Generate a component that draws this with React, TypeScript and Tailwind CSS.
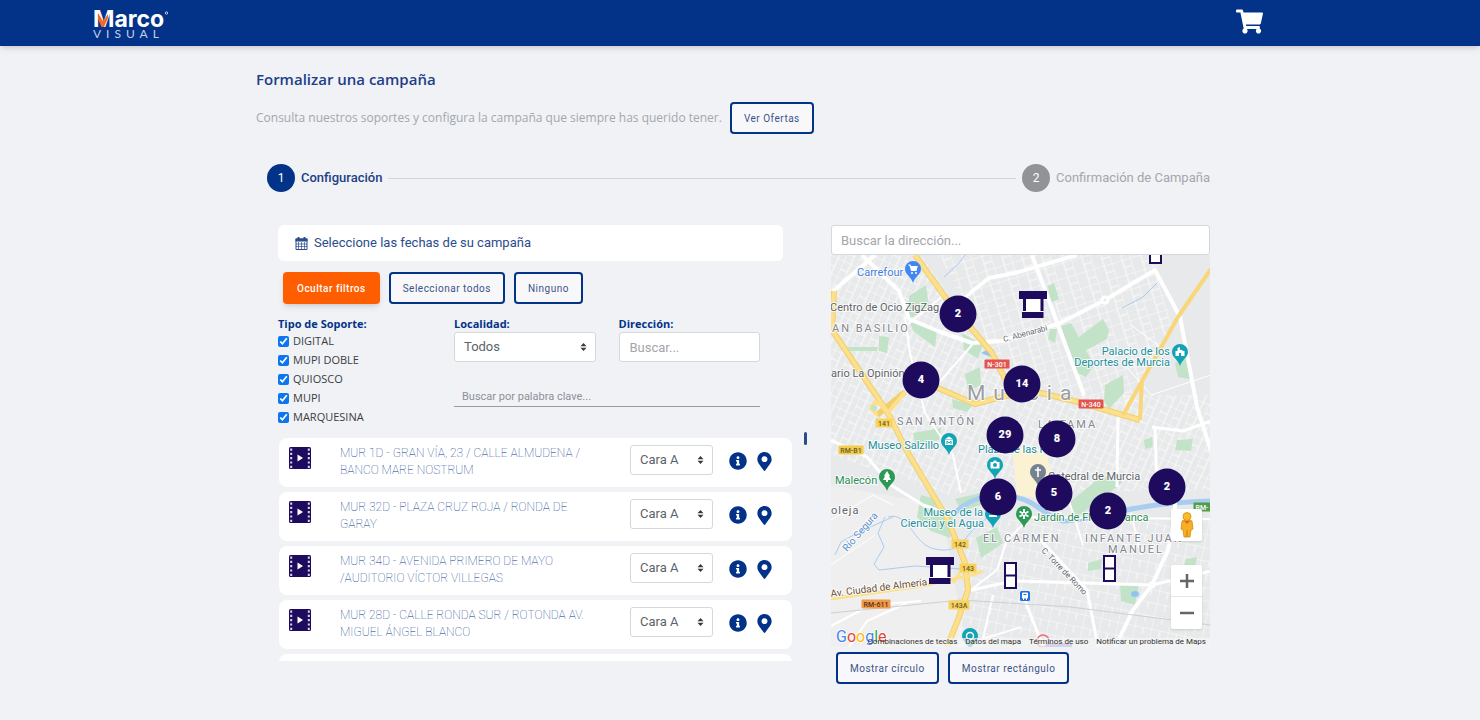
import React from 'react';
import { FaInfoCircle, FaMapMarkerAlt, FaShoppingCart } from 'react-icons/fa';

interface Support {
  id: string;
  name: string;
}

const supports: Support[] = [
  { id: 'mur-1d', name: 'MUR 1D - GRAN VÍA, 23 / CALLE ALMUDENA / BANCO MARE NOSTRUM' },
  { id: 'mur-32d', name: 'MUR 32D - PLAZA CRUZ ROJA / RONDA DE GARAY' },
  { id: 'mur-34d', name: 'MUR 34D - AVENIDA PRIMERO DE MAYO /AUDITORIO VÍCTOR VILLEGAS' },
  { id: 'mur-28d', name: 'MUR 28D - CALLE RONDA SUR / ROTONDA AV. MIGUEL ÁNGEL BLANCO' },
];

const supportTypes = ['DIGITAL', 'MUPI DOBLE', 'QUIOSCO', 'MUPI', 'MARQUESINA'];

const MAP_WIDTH = 379;
const MAP_HEIGHT = 392;

const clusters = [
  { x: 127, y: 59, count: 2 },
  { x: 90, y: 125, count: 4 },
  { x: 191, y: 129, count: 14 },
  { x: 174, y: 180, count: 29 },
  { x: 226, y: 184, count: 8 },
  { x: 167, y: 242, count: 6 },
  { x: 223, y: 238, count: 5 },
  { x: 277, y: 256, count: 2 },
  { x: 336, y: 232, count: 2 },
];

function Logo() {
  return (
    <svg width="84" height="40" viewBox="0 -4 84 40" role="img" aria-label="Marco Visual">
      <text x="0" y="20" fontFamily="Inter, sans-serif" fontWeight="700" fontSize="23" fill="#fff">
        Marco
      </text>
      <path d="M5 6 L10 14 L15 7 V11 L11 20 H8.500 L5 12 Z" fill="#ef6c2f" />
      <circle cx="73.500" cy="6" r="1.200" fill="none" stroke="#fff" strokeWidth="0.700" />
      <text x="0" y="31" fontFamily="Lato, sans-serif" fontSize="12" letterSpacing="5" fill="#c3cfe8">
        VISUAL
      </text>
    </svg>
  );
}

function CalendarIcon() {
  return (
    <svg width="13" height="13" viewBox="0 0 13 13" aria-hidden="true">
      <path d="M1 2 H12 V12.500 H1 Z" fill="#fff" stroke="#2b4c8c" />
      <path d="M0.500 1.500 H12.500 V4.500 H0.500 Z" fill="#2b4c8c" />
      <path d="M3.500 0 V3 M9.500 0 V3" stroke="#2b4c8c" strokeWidth="2" />
      <path d="M3.500 5 V12 M6.500 5 V12 M9.500 5 V12 M1 7 H12 M1 9.500 H12" stroke="#2b4c8c" strokeWidth="0.700" />
    </svg>
  );
}

function FilmIcon() {
  return (
    <svg className="shrink-0" width="22" height="22" viewBox="0 0 22 22" aria-hidden="true">
      <rect width="22" height="22" rx="1.500" fill="#1f0b5e" />
      <path
        d="M2.200 1.500 V21 M19.800 1.500 V21"
        stroke="#d9d5ea"
        strokeWidth="2"
        strokeDasharray="2.200 2.100"
      />
      <path d="M8.500 7.500 L14 11 L8.500 14.500 Z" fill="#fff" />
    </svg>
  );
}

interface SelectBoxProps {
  id: string;
  options: string[];
  label?: string;
}

function SelectBox({ id, options, label }: SelectBoxProps) {
  return (
    <div className="relative">
      <select
        id={id}
        aria-label={label}
        className="h-[30px] w-full appearance-none rounded-[3px] border border-[#d5d8dd] bg-white pl-[9px] pr-6 text-[13px] text-[#5c636b]"
      >
        {options.map((option) => (
          <option key={option}>{option}</option>
        ))}
      </select>
      <svg
        className="pointer-events-none absolute right-[9px] top-[11px]"
        width="7"
        height="8"
        viewBox="0 0 7 8"
        aria-hidden="true"
      >
        <path d="M0.500 3.300 L3.500 0 L6.500 3.300 Z M0.500 4.700 L3.500 8 L6.500 4.700 Z" fill="#343a40" />
      </svg>
    </div>
  );
}

function OutlineButton({ children }: { children: React.ReactNode }) {
  return (
    <button
      type="button"
      className="h-8 rounded-[4px] border-2 border-[#033388] bg-[#f8f8fb] px-3 text-[10px] tracking-wider text-[#3c5486]"
    >
      {children}
    </button>
  );
}

function SupportCard({ support }: { support: Support }) {
  return (
    <li className="flex h-[49px] shrink-0 items-start rounded-lg bg-white pl-[10px] pr-[18px] pt-[7px]">
      <div className="pt-[2px]">
        <FilmIcon />
      </div>
      <p className="ml-[29px] flex-1 pr-8 text-[12px] font-thin leading-[17px] text-[#033388]">
        {support.name}
      </p>
      <div className="w-[83px]">
        <SelectBox id={`face-${support.id}`} label="Cara" options={['Cara A', 'Cara B']} />
      </div>
      <div className="flex h-8 items-center gap-[8px] pl-4 text-[#033388]">
        <button type="button" aria-label="Información">
          <FaInfoCircle size={18} />
        </button>
        <button type="button" aria-label="Ver en el mapa">
          <FaMapMarkerAlt size={19} />
        </button>
      </div>
    </li>
  );
}

function Filters() {
  return (
    <div className="mt-3 grid grid-cols-[176px_1fr]">
      <fieldset>
        <legend className="font-['Open_Sans',sans-serif] text-[11px] font-bold leading-4 text-[#033388]">
          Tipo de Soporte:
        </legend>
        <div className="flex flex-col">
          {supportTypes.map((type) => (
            <label
              key={type}
              className="flex h-[19px] items-center gap-1 font-['Open_Sans',sans-serif] text-[11px] text-[#3a3d42]"
            >
              <input type="checkbox" defaultChecked className="size-[11px] accent-[#0b76ef]" />
              {type}
            </label>
          ))}
        </div>
      </fieldset>
      <div className="pr-8">
        <div className="grid grid-cols-2 gap-[23px]">
          <div>
            <label
              htmlFor="city"
              className="block font-['Open_Sans',sans-serif] text-[11px] font-bold leading-4 text-[#033388]"
            >
              Localidad:
            </label>
            <SelectBox id="city" options={['Todos', 'Murcia']} />
          </div>
          <div>
            <label
              htmlFor="address"
              className="block font-['Open_Sans',sans-serif] text-[11px] font-bold leading-4 text-[#033388]"
            >
              Dirección:
            </label>
            <input
              id="address"
              placeholder="Buscar..."
              className="h-[30px] w-full rounded-[3px] border border-[#d5d8dd] bg-white px-[10px] text-[13px] placeholder:text-[#a3a6ab]"
            />
          </div>
        </div>
        <input
          aria-label="Buscar por palabra clave"
          placeholder="Buscar por palabra clave..."
          className="mt-6 h-[21px] w-full border-b border-[#9a9ca1] bg-transparent px-2 text-[11px] placeholder:text-[#8d9096]"
        />
      </div>
    </div>
  );
}

function Pin({ x, y, color, children }: { x: number; y: number; color: string; children?: React.ReactNode }) {
  return (
    <g transform={`translate(${x} ${y})`}>
      <path d="M0 14 C-1.500 8 -8 5.500 -8 0 A8 8 0 1 1 8 0 C8 5.500 1.500 8 0 14 Z" fill={color} />
      {children}
    </g>
  );
}

function Kiosk({ x, y }: { x: number; y: number }) {
  return (
    <g transform={`translate(${x} ${y})`}>
      <path d="M4 8 H24 V22 H4 Z" fill="#fff" />
      <path d="M0 0 H28 V8 H0 Z M3 21 H24.500 V27 H3 Z M4 8 H7 V20 H4 Z M21.500 8 H24.500 V20 H21.500 Z" fill="#1f0b5e" />
    </g>
  );
}

function Mupi({ x, y }: { x: number; y: number }) {
  return (
    <g transform={`translate(${x} ${y})`}>
      <path d="M1 1 H12 V26 H1 Z M1 13.500 H12" fill="#fff" stroke="#1f0b5e" strokeWidth="2" />
    </g>
  );
}

function RoadSign({ x, y, text, fill, color }: { x: number; y: number; text: string; fill: string; color: string }) {
  const width = text.length * 4 + 5;
  return (
    <g>
      <rect x={x - width / 2} y={y - 4.5} width={width} height="9" rx="1" fill={fill} />
      <text x={x} y={y + 2.5} fontSize="7" fontWeight="500" textAnchor="middle" fill={color}>
        {text}
      </text>
    </g>
  );
}

function CityMap() {
  return (
    <svg
      className="block size-full"
      viewBox={`0 0 ${MAP_WIDTH} ${MAP_HEIGHT}`}
      preserveAspectRatio="none"
      fontFamily="Roboto, sans-serif"
      role="img"
      aria-label="Mapa de Murcia"
    >
      <defs>
        <pattern id="blocks" width="19" height="15" patternUnits="userSpaceOnUse" patternTransform="rotate(-17)">
          <path d="M0 0 H19 M0 0 V15 M11 0 V15 M11 8 H19" fill="none" stroke="#fbfbfb" />
        </pattern>
        <pattern id="old-town" width="14" height="17" patternUnits="userSpaceOnUse" patternTransform="rotate(24)">
          <path d="M0 0 H14 M0 0 V17 M0 9 H8 M8 0 V17" fill="none" stroke="#fbfbfb" />
        </pattern>
        <pattern id="south" width="17" height="13" patternUnits="userSpaceOnUse" patternTransform="rotate(12)">
          <path d="M0 0 H17 M0 0 V13 M9 0 V7" fill="none" stroke="#fbfbfb" />
        </pattern>
      </defs>

      <rect width="380" height="392" fill="#e8e9ea" />
      <path d="M0 230 L110 250 L135 392 H0 Z" fill="#efefef" />
      <path d="M108 0 H232 L262 145 L172 120 Z M230 0 H325 L340 70 L300 150 H258 Z" fill="url(#blocks)" />
      <path d="M0 0 H90 L172 120 L190 225 L120 240 L0 200 Z M185 140 H380 V235 L190 238 Z" fill="url(#old-town)" />
      <path d="M140 265 L380 262 V392 H125 Z" fill="url(#south)" />
      <path d="M181 190 L216 200 L226 246 L186 240 Z" fill="#fbf1d3" />

      <g fill="#c3e3c9">
        <path d="M78 41 L95 30 L98 52 L78 64 Z" />
        <path d="M78 64 L106 75 L104 92 L82 76 Z" />
        <path d="M131 78 L152 90 L147 104 L133 95 Z" />
        <path d="M134 119 L149 112 L150 130 L137 136 Z" />
        <path d="M121 144 L142 150 L136 157 L122 153 Z" />
        <path d="M48 81 L58 82 L56 98 L48 96 Z" />
        <path d="M16 92 L47 92 L46 96 L16 96 Z" />
        <path d="M82 178 L110 173 L108 185 L84 190 Z" />
        <path d="M230 71 L240 68 L263 110 L255 122 L246 118 Z" />
        <path d="M245 84 L272 64 L278 75 L276 84 L252 97 Z" />
        <path d="M219 74 L226 74 L224 88 L217 84 Z" />
        <path d="M217 31 L223 28 L228 44 L220 48 Z" />
        <path d="M274 130 L292 120 L293 138 L278 154 L273 146 Z" />
        <path d="M344 108 L358 102 L359 124 L347 122 Z" />
        <path d="M346 185 L362 184 L360 196 L344 195 Z" />
        <path d="M90 240 L101 243 L122 262 L119 283 L100 276 L86 262 Z" />
        <path d="M124 244 L174 232 L176 242 L130 256 Z" />
        <path d="M145 283 L166 272 L172 288 L150 303 Z" />
        <path d="M267 224 L289 218 L291 228 L246 262 L238 248 Z" />
        <path d="M289 328 L308 330 L304 350 L290 346 Z" />
        <path d="M257 308 L271 304 L270 314 L257 316 Z" />
        <path d="M313 185 L321 182 L322 192 L314 194 Z" />
        <path d="M355 304 L366 302 L364 312 L352 314 Z" />
      </g>

      <g fill="none" stroke="#a9cdf1">
        <path d="M124 258 C142 240 160 240 184 242 C206 246 214 262 232 266 C264 266 296 248 380 246" strokeWidth="5" />
        <path d="M57 262 C78 256 82 290 104 294 C132 300 132 280 150 268 L170 250" />
        <path d="M54 262 L47 278 L53 292 L43 309 L48 315 L84 311 L130 314" />
        <path d="M291 53 L312 42 L326 28" />
        <path d="M113 22 L128 8 L134 0" />
        <path d="M4 300 L10 287 L30 276 L62 262" />
      </g>
      <ellipse cx="304" cy="339" rx="4" ry="3" fill="#8fc5f5" />
      <path d="M150 98 L158 94 L160 102 Z" fill="#8fc5f5" />

      <g fill="none" stroke="#fff" strokeWidth="4" strokeLinejoin="round">
        <path d="M0 38 L44 0 M31 0 L68 36 L78 64 L107 76 L141 88 L171 86 L227 69 L274 45 L324 15 L349 62 L366 152 L380 196" />
        <path d="M201 0 L227 70 L253 140 M184 18 L246 0 M139 38 L158 23 L184 18" />
        <path d="M140 38 L120 52" strokeWidth="3" />
        <path d="M74 62 L79 98 L94 158 L122 200 L130 238" strokeWidth="2" />
        <path d="M106 130 L141 90 M113 40 L76 70" strokeWidth="2" />
        <path d="M0 185 L36 202 L60 230 L92 250 L122 260" strokeWidth="3" />
        <path d="M287 162 L286 232 M324 172 L326 236 M321 172 L352 176 L380 166" strokeWidth="3" />
        <path d="M344 240 L344 262 L337 295 L321 330 L302 355 L284 392" strokeWidth="4" />
        <path d="M136 336 L182 326 L321 330 L380 316" strokeWidth="3" />
        <path d="M205 280 L256 335 L267 392 M192 340 L212 392" strokeWidth="3" />
        <path d="M136 338 L166 315 L176 285 L200 262" strokeWidth="2" />
        <path d="M0 371 L40 350 L90 346 M18 392 L36 366 L76 348" strokeWidth="2" />
        <path d="M150 392 L162 340 M126 392 L190 372" strokeWidth="2" />
        <path d="M294 110 L320 140 L380 120 M300 70 L340 100" strokeWidth="1" />
        <path d="M186 262 L380 264 M238 246 L252 290 M300 258 L310 300" strokeWidth="2" />
        <path d="M0 310 L44 280 M0 265 L42 240 L62 250" strokeWidth="1" />
      </g>
      <path d="M0 358 L130 345 L240 352 L380 370" fill="none" stroke="#cfcfcf" />

      <g fill="none" stroke="#f1cf6a" strokeWidth="6" strokeLinejoin="round">
        <path d="M84 0 L114 42 L161 98 L176 128" />
        <path d="M3 36 L1 75 L57 158 L77 198 L117 265 L134 308 L137 335 L128 362 L116 392" />
        <path d="M46 160 L74 137 M107 133 L144 149 L174 141 L210 138 L247 147 L309 165" />
      </g>
      <g fill="none" stroke="#fce08e" strokeWidth="4" strokeLinejoin="round">
        <path d="M84 0 L114 42 L161 98 L176 128" />
        <path d="M3 36 L1 75 L57 158 L77 198 L117 265 L134 308 L137 335 L128 362 L116 392" />
        <path d="M46 160 L40 153 L44 147 L50 150 L57 158 L74 137 M107 133 L144 149 L174 141 L210 138 L247 147 L309 165" />
        <path d="M309 165 L311 125 M292 160 L347 62 L380 14" stroke="#f8d679" />
        <path d="M0 344 L91 331 L141 320 L152 316 M122 328 L134 310" strokeWidth="3" />
      </g>
      <circle cx="43" cy="153" r="3" fill="#c3e3c9" />
      <circle cx="274" cy="45" r="3" fill="#e8e9ea" stroke="#fff" strokeWidth="3" />
      <circle cx="321" cy="330" r="2" fill="#e8e9ea" stroke="#fff" strokeWidth="3" />

      <RoadSign x={166} y={109} text="N-301" fill="#e2544f" color="#fff" />
      <RoadSign x={260} y={149} text="N-340" fill="#e2544f" color="#fff" />
      <RoadSign x={53} y={168} text="141" fill="#f8d35c" color="#6b5a2a" />
      <RoadSign x={20} y={195} text="RM-B1" fill="#f4cd4d" color="#6b5a2a" />
      <RoadSign x={129} y={289} text="142" fill="#f8d35c" color="#6b5a2a" />
      <RoadSign x={137} y={313} text="143" fill="#f8d35c" color="#6b5a2a" />
      <RoadSign x={128} y={350} text="143A" fill="#f8d35c" color="#6b5a2a" />
      <RoadSign x={45} y={349} text="RM-611" fill="#f09a4a" color="#5a3412" />
      <RoadSign x={371} y={252} text="RM-" fill="#4f9e4a" color="#fff" />

      <g stroke="#fff" strokeWidth="2" strokeOpacity="0.800" style={{ paintOrder: 'stroke' }} fontSize="11">
        <g fill="#5f6368">
          <text x="-1" y="56">Centro de Ocio ZigZag</text>
          <text x="0" y="122">ario La Opinión</text>
          <text x="217" y="225">Catedral de Murcia</text>
          <text x="0" y="259" letterSpacing="1">oleja</text>
          <text x="173" y="87" fontSize="8" transform="rotate(-15 173 87)">C. Abenarabi</text>
          <text x="210" y="296" fontSize="8" transform="rotate(46 210 296)">C. Torre de Romo</text>
          <text x="0" y="342" fontSize="10" fill="#6b5138" transform="rotate(-7 0 342)">Av. Ciudad de Almería</text>
        </g>
        <g fill="#82868f" letterSpacing="2">
          <text x="1" y="77">AN BASILIO</text>
          <text x="66" y="170">SAN ANTÓN</text>
          <text x="207" y="173">LA FAMA</text>
          <text x="152" y="287">EL CARMEN</text>
          <text x="254" y="287">INFANTE JUAN</text>
          <text x="277" y="298">MANUEL</text>
          <text x="136" y="145" fontSize="21" letterSpacing="8" fill="#9a9da3">Murcia</text>
        </g>
        <g fill="#1d8f9e">
          <text x="37" y="194">Museo Salzillo</text>
          <text x="147" y="198">Plaza de las Flores</text>
          <text x="339" y="100" textAnchor="end">Palacio de los</text>
          <text x="339" y="111" textAnchor="end">Deportes de Murcia</text>
          <text x="152" y="261" textAnchor="end">Museo de la</text>
          <text x="153" y="272" textAnchor="end">Ciencia y el Agua</text>
        </g>
        <text x="203" y="266" fill="#2f8d54">Jardín de Floridablanca</text>
        <text x="4" y="229" fill="#2f8d54">Malecón</text>
        <text x="26" y="21" fill="#3f7fe0">Carrefour</text>
        <text x="16" y="297" fontSize="10" fill="#5a8fcb" transform="rotate(-49 16 297)">Río Segura</text>
      </g>

      <Pin x={82} y={14} color="#4285f4">
        <path d="M-4.500 -4 H-3 L-1.500 1.500 H3 L4 -2.500 H-2.500" fill="#fff" stroke="#fff" strokeWidth="1.200" />
        <circle cx="-1" cy="4" r="1" fill="#fff" />
        <circle cx="3" cy="4" r="1" fill="#fff" />
      </Pin>
      <Pin x={349} y={97} color="#12a4b5">
        <path d="M-4.500 4 V-1 H-2.500 V-4 L0 -5 V-2 H2.500 V-1 H4.500 V4 H1 V1 H-1 V4 Z" fill="#fff" />
      </Pin>
      <Pin x={118} y={186} color="#12a4b5">
        <path d="M-4.500 -1.500 L0 -4.500 L4.500 -1.500 Z M-4 -1 H4 V4 H-4 Z" fill="#fff" />
        <path d="M-2 3 V0 L0 2 L2 0 V3" fill="none" stroke="#12a4b5" />
      </Pin>
      <Pin x={164} y={210} color="#12a4b5">
        <path d="M-4.500 -3 H-2 L-1 -4.500 H1 L2 -3 H4.500 V3.500 H-4.500 Z" fill="#fff" />
        <circle r="2" fill="#12a4b5" />
      </Pin>
      <Pin x={162} y={259} color="#12a4b5">
        <path d="M-4 1 H4 V3 H-4 Z" fill="#fff" />
      </Pin>
      <Pin x={56} y={222} color="#2b9a56">
        <path d="M0 -6 L3 -1 H2 L4 3 H1 V5 H-1 V3 H-4 L-2 -1 H-3 Z" fill="#fff" />
      </Pin>
      <Pin x={193} y={259} color="#2b9a56">
        <path d="M0 -5 V5 M-4.500 -2.500 L4.500 2.500 M-4.500 2.500 L4.500 -2.500" stroke="#fff" strokeWidth="2" />
        <circle r="1" fill="#2b9a56" />
      </Pin>
      <Pin x={207} y={217} color="#75828f">
        <path d="M0 -5 V5 M-3 -2 H3" stroke="#fff" strokeWidth="1.600" />
      </Pin>
      <Pin x={139} y={381} color="#12a4b5">
        <circle r="3.500" fill="none" stroke="#fff" strokeWidth="1.500" />
      </Pin>
      <rect x="189" y="336" width="10" height="10" rx="1.500" fill="#2374e1" />
      <path d="M191.500 338 H196.500 V343 H191.500 Z M192.500 343 V345 M195.500 343 V345" fill="#fff" stroke="#fff" />
      <path d="M192.500 339.500 H195.500" stroke="#2374e1" />
      <circle cx="212" cy="386" r="6" fill="none" stroke="#ea7070" strokeWidth="1.500" />
      <path d="M215 388 H241 V392 H215 Z" fill="#8d83c9" />

      <Kiosk x={188} y={36} />
      <Kiosk x={95} y={302} />
      <Mupi x={173} y={307} />
      <Mupi x={272} y={300} />
      <Mupi x={318} y={-18} />

      <rect x="36" y="383" width="344" height="9" fill="#f5f5f5" fillOpacity="0.700" />
      <text x="5" y="387" fontSize="16" stroke="#fff" strokeWidth="1.500" style={{ paintOrder: 'stroke' }}>
        <tspan fill="#4285f4">G</tspan>
        <tspan fill="#ea4335">o</tspan>
        <tspan fill="#fbbc05">o</tspan>
        <tspan fill="#4285f4">g</tspan>
        <tspan fill="#34a853">l</tspan>
        <tspan fill="#ea4335">e</tspan>
      </text>
    </svg>
  );
}

function Pegman() {
  return (
    <svg width="14" height="26" viewBox="0 0 14 26" aria-hidden="true">
      <path d="M2 9 Q7 6 12 9 L13 17 L11 18 L10 25 H4 L3 18 L1 17 Z" fill="#f5b021" stroke="#d38b16" strokeWidth="0.800" />
      <circle cx="7" cy="4.500" r="4" fill="#f9bd2c" stroke="#d38b16" strokeWidth="0.800" />
      <path d="M4 9 L7 12 L10 9 Z" fill="#e4642d" />
      <path d="M7 18 V25" stroke="#c87d14" />
    </svg>
  );
}

function MapPanel() {
  return (
    <section>
      <input
        aria-label="Buscar la dirección"
        placeholder="Buscar la dirección..."
        className="block h-[30px] w-full rounded-[3px] border border-[#d5d8dd] bg-white px-[9px] text-[13px] placeholder:text-[#a3a6ab]"
      />
      <div className="relative h-[392px] overflow-hidden">
        <CityMap />
        {clusters.map((cluster) => (
          <button
            key={`${cluster.x}-${cluster.y}`}
            type="button"
            className="absolute flex size-[37px] -translate-x-1/2 -translate-y-1/2 items-center justify-center rounded-full bg-[#1f0b5e] text-[11px] font-black text-white"
            style={{
              left: `${(cluster.x / MAP_WIDTH) * 100}%`,
              top: `${(cluster.y / MAP_HEIGHT) * 100}%`,
            }}
          >
            {cluster.count}
          </button>
        ))}
        <div className="absolute bottom-[18px] right-2 flex w-[31px] flex-col gap-6">
          <button
            type="button"
            aria-label="Street View"
            className="flex h-8 items-center justify-center rounded-xs bg-white shadow-sm"
          >
            <Pegman />
          </button>
          <div className="flex flex-col divide-y divide-[#e6e6e6] rounded-xs bg-white shadow-sm">
            <button type="button" aria-label="Acercar" className="flex h-8 items-center justify-center">
              <svg width="14" height="14" viewBox="0 0 14 14" aria-hidden="true">
                <path d="M7 0 V14 M0 7 H14" stroke="#666" strokeWidth="2.500" />
              </svg>
            </button>
            <button type="button" aria-label="Alejar" className="flex h-8 items-center justify-center">
              <svg width="14" height="14" viewBox="0 0 14 14" aria-hidden="true">
                <path d="M0 7 H14" stroke="#666" strokeWidth="2.500" />
              </svg>
            </button>
          </div>
        </div>
        <div className="absolute bottom-0 right-1 flex gap-2 text-[8px] leading-[10px] text-[#333]">
          <button type="button">Combinaciones de teclas</button>
          <span>Datos del mapa</span>
          <a href="#terminos">Términos de uso</a>
          <a href="#notificar">Notificar un problema de Maps</a>
        </div>
      </div>
      <div className="mt-[5px] flex gap-[9px] pl-[5px]">
        <OutlineButton>Mostrar círculo</OutlineButton>
        <OutlineButton>Mostrar rectángulo</OutlineButton>
      </div>
    </section>
  );
}

export default function App() {
  return (
    <div className="min-h-screen bg-[#f0f2f6] font-['Roboto',sans-serif]">
      <header className="flex h-[46px] items-center justify-between bg-[#033388] pl-[93px] pr-[217px] shadow-md">
        <a href="#inicio">
          <Logo />
        </a>
        <a href="#carrito" aria-label="Carrito" className="pb-1 text-white">
          <FaShoppingCart size={27} />
        </a>
      </header>

      <main className="mx-auto max-w-[968px] pb-9 pt-[21px]">
        <h1 className="font-['Open_Sans',sans-serif] text-[15px] font-semibold leading-6 text-[#1d3f86]">
          Formalizar una campaña
        </h1>
        <div className="mt-[11px] flex items-center gap-2">
          <p className="font-['Open_Sans',sans-serif] text-[12px] text-[#a4a7ac]">
            Consulta nuestros soportes y configura la campaña que siempre has querido tener.
          </p>
          <OutlineButton>Ver Ofertas</OutlineButton>
        </div>

        <ol className="mt-[30px] flex items-center gap-[6px] pl-[11px] pr-[14px] text-[13px]">
          <li className="flex items-center gap-[6px] font-medium text-[#1d3f86]">
            <span className="flex size-7 items-center justify-center rounded-full bg-[#033388] text-xs font-normal text-white">
              1
            </span>
            Configuración
          </li>
          <li aria-hidden="true" className="h-px flex-1 bg-[#d3d5da]" />
          <li className="flex items-center gap-[6px] text-[#a4a7ac]">
            <span className="flex size-7 items-center justify-center rounded-full bg-[#929397] text-xs text-white">
              2
            </span>
            Confirmación de Campaña
          </li>
        </ol>

        <div className="mt-[33px] grid grid-cols-[514fr_39px_379fr] pl-[22px] pr-[14px]">
          <section className="min-w-0">
            <button
              type="button"
              className="flex h-9 w-[505px] max-w-full items-center gap-[6px] rounded-md bg-white px-[17px] text-[13px] text-[#2b4c8c]"
            >
              <CalendarIcon />
              Seleccione las fechas de su campaña
            </button>
            <div className="mt-[11px] flex gap-[9px] pl-[5px]">
              <button
                type="button"
                className="h-8 rounded-[4px] bg-[#ff5e00] px-[14px] text-[10px] font-medium tracking-wider text-white shadow-md"
              >
                Ocultar filtros
              </button>
              <OutlineButton>Seleccionar todos</OutlineButton>
              <OutlineButton>Ninguno</OutlineButton>
            </div>
            <Filters />
            <ul className="mt-[11px] flex h-[223px] flex-col gap-[5px] overflow-hidden pl-px">
              {supports.map((support) => (
                <SupportCard key={support.id} support={support} />
              ))}
              <li className="h-[49px] shrink-0 rounded-lg bg-white" />
            </ul>
          </section>
          <div className="pl-3 pt-[207px]">
            <div className="h-[13px] w-[3px] rounded-xs bg-[#2b4c8c]" />
          </div>
          <MapPanel />
        </div>
      </main>
    </div>
  );
}
